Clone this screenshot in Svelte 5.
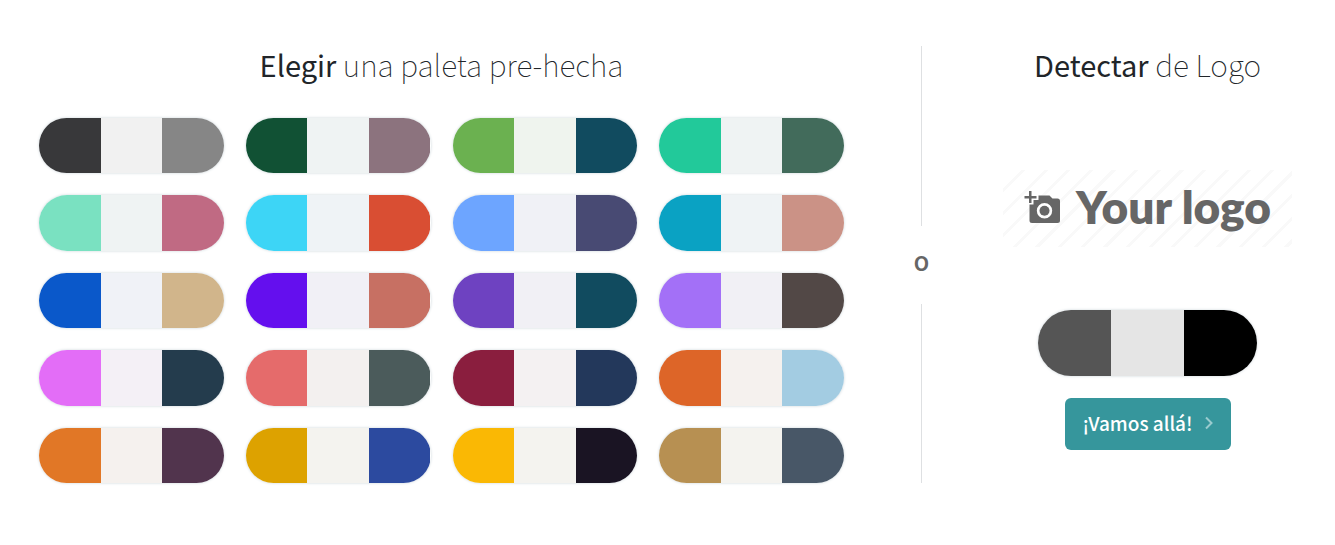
<script>
  const palettes = [
    ['#38383a', '#f1f1f1', '#868686'],
    ['#115134', '#eff3f3', '#8c737e'],
    ['#6bb150', '#eff4ee', '#114b5f'],
    ['#22c99a', '#eff3f3', '#426b5b'],
    ['#7ae1c1', '#eff3f3', '#c06a83'],
    ['#3dd5f6', '#eff3f6', '#d94e33'],
    ['#6da5ff', '#f0f1f6', '#484a73'],
    ['#0aa2c3', '#eff3f5', '#cb9286'],
    ['#0a58ca', '#f0f2f7', '#d1b58b'],
    ['#640fee', '#f1f0f6', '#c77063'],
    ['#6e42c1', '#f1f0f5', '#114b5f'],
    ['#a370f7', '#f1f0f5', '#524846'],
    ['#e36df7', '#f4f0f6', '#243c4d'],
    ['#e56b6b', '#f3f0ef', '#4b5b5b'],
    ['#8a1e3e', '#f4f1f2', '#23385b'],
    ['#dd6528', '#f5f1ee', '#a3cce2'],
    ['#e17726', '#f5f1ee', '#51344d'],
    ['#dda200', '#f4f3ef', '#2c4a9f'],
    ['#fab804', '#f4f3ef', '#1a1423'],
    ['#b79052', '#f4f3ef', '#485767'],
  ];
  const detected = ['#555555', '#e5e5e5', '#000000'];
</script>

{#snippet swatches(colors)}
  {#each colors as color}
    <span class="swatch" style:background={color}></span>
  {/each}
{/snippet}

<main class="chooser">
  <section class="premade">
    <h2><strong>Elegir</strong> una paleta pre-hecha</h2>
    <div class="palettes">
      {#each palettes as colors}
        <button type="button" class="pill" aria-label={colors.join(', ')}>
          {@render swatches(colors)}
        </button>
      {/each}
    </div>
  </section>

  <div class="divider"><span>O</span></div>

  <section class="detect">
    <h2><strong>Detectar</strong> de Logo</h2>
    <button type="button" class="logo">
      <svg viewBox="0 0 36 32" width="36" height="32" aria-hidden="true">
        <path fill="#666" fill-rule="evenodd" d="M14.500 4.500H25.500L28.500 7.500H33.500Q36 7.500 36 10V29.500Q36 32 33.500 32H8Q5.500 32 5.500 29.500V13.500H9.500V9H14.500ZM20.500 12A7.700 7.700 0 1 0 20.500 27.400A7.700 7.700 0 1 0 20.500 12Z" />
        <circle cx="20.500" cy="19.700" r="5" fill="#666" />
        <path fill="#666" d="M5 0H7.500V5H12.500V7.500H7.500V12H5V7.500H0.500V5H5Z" />
      </svg>
      <span>Your logo</span>
    </button>
    <div class="pill detected">{@render swatches(detected)}</div>
    <button type="button" class="go">
      <span>¡Vamos allá!</span>
      <svg viewBox="0 0 8 14" width="8" height="14" aria-hidden="true">
        <path d="M1 1.500L6.500 7L1 12.500" fill="none" stroke="#9acbce" stroke-width="2" />
      </svg>
    </button>
  </section>
</main>

<style>
  :global(body) {
    margin: 0;
    background: #fff;
  }

  .chooser {
    display: grid;
    grid-template-columns: 883fr 77px 375fr;
    padding: 46px 0 62px;
    color: #212529;
    font-family: 'Noto Sans CJK SC', 'Open Sans', sans-serif;
  }

  button {
    margin: 0;
    padding: 0;
    border: 0;
    background: none;
    font: inherit;
    cursor: pointer;
  }

  h2 {
    margin: 0;
    font-size: 30px;
    line-height: 36px;
    font-weight: 100;
    text-align: center;
    white-space: nowrap;
  }

  h2 strong {
    font-size: 29px;
    font-weight: 400;
  }

  .premade {
    padding: 0 39px;
  }

  .palettes {
    display: grid;
    grid-template-columns: repeat(4, 1fr);
    gap: 22px;
    margin-top: 36px;
  }

  .pill {
    display: flex;
    aspect-ratio: 10 / 3;
    border-radius: 40px;
    overflow: hidden;
    box-shadow: 0 0 3px #c9d3d8;
  }

  .swatch {
    flex: 1;
  }

  .divider {
    display: flex;
    flex-direction: column;
    align-items: center;
    color: #666;
    font-size: 20px;
    line-height: 74px;
    font-weight: 700;
  }

  .divider span {
    padding-bottom: 4px;
  }

  .divider::before,
  .divider::after {
    content: '';
    flex: 1;
    width: 1px;
    background: #dee0e2;
  }

  .detect {
    display: flex;
    flex-direction: column;
    align-items: center;
  }

  .logo {
    box-sizing: border-box;
    display: flex;
    align-items: center;
    justify-content: center;
    gap: 16px;
    width: 289px;
    height: 77px;
    margin-top: 88px;
    padding-bottom: 4px;
    background: repeating-linear-gradient(135deg, #fff 0 13px, #f9f9f9 13px 16px);
    color: #666;
    font-family: Lato, sans-serif;
    font-size: 46px;
    line-height: 72px;
    font-weight: 800;
    white-space: nowrap;
  }

  .detected {
    width: 219px;
    aspect-ratio: 219 / 66;
    margin-top: 63px;
  }

  .go {
    display: flex;
    align-items: center;
    gap: 12px;
    margin-top: 22px;
    padding: 0 18px 2px;
    border-radius: 6px;
    background: #36969c;
    color: #fff;
    font-size: 19px;
    line-height: 50px;
    font-weight: 500;
  }
</style>
